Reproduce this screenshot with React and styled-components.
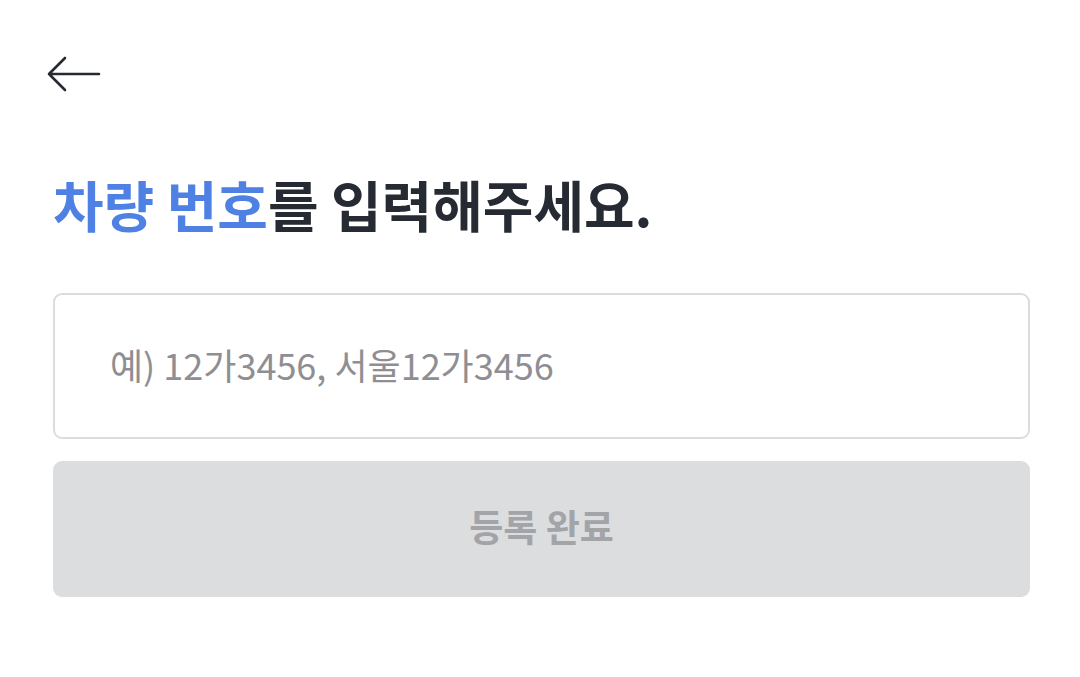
import styled, { createGlobalStyle } from 'styled-components';

const GlobalStyle = createGlobalStyle`
  html, body {
    margin: 0;
    padding: 0;
    background: #ffffff;
  }
  body {
    font-family: "Noto Sans CJK KR", "Noto Sans", sans-serif;
  }
  * {
    box-sizing: border-box;
  }
`;

function App() {
  return (
    <>
      <GlobalStyle />
      <Page>
        <BackButton aria-label="back">
          <svg width="56" height="40" viewBox="0 0 56 40" fill="none">
            <path
              d="M54 20H4M20 4L4 20L20 36"
              stroke="#262a33"
              strokeWidth="2.6"
              strokeLinecap="round"
              strokeLinejoin="round"
            />
          </svg>
        </BackButton>
        <Title>
          <Highlight>차량 번호</Highlight>를 입력해주세요.
        </Title>
        <Form>
          <PlateInput type="text" placeholder="예) 12가3456, 서울12가3456" />
          <SubmitButton disabled>등록 완료</SubmitButton>
        </Form>
      </Page>
    </>
  );
}

export default App;

const Page = styled.div`
  display: flex;
  flex-direction: column;
  width: 1080px;
  height: 677px;
  padding: 0 50px 0 53px;
`;

const BackButton = styled.button`
  all: unset;
  display: flex;
  align-items: center;
  width: 56px;
  height: 40px;
  margin: 54px 0 0 -8px;
  cursor: pointer;
`;

const Title = styled.h1`
  margin: 74px 0 0;
  font-size: 55px;
  font-weight: 700;
  line-height: 70px;
  letter-spacing: 0;
  color: #262a33;
  white-space: nowrap;
`;

const Highlight = styled.span`
  color: #4e81e3;
`;

const Form = styled.div`
  display: flex;
  flex-direction: column;
  gap: 22px;
  margin-top: 55px;
`;

const PlateInput = styled.input`
  width: 977px;
  height: 146px;
  padding: 0 0 5px 55px;
  border: 2px solid #dcdcde;
  border-radius: 9px;
  font-family: "Noto Sans CJK KR", "Noto Sans", sans-serif;
  font-size: 36px;
  color: #262a33;
  outline: none;

  &::placeholder {
    color: #8e8e93;
  }
`;

const SubmitButton = styled.button`
  width: 977px;
  height: 136px;
  padding: 0 0 6px;
  border: none;
  border-radius: 9px;
  background-color: #dcdddf;
  font-family: "Noto Sans CJK KR", "Noto Sans", sans-serif;
  font-size: 37px;
  font-weight: 700;
  color: #a3a4a8;
`;
